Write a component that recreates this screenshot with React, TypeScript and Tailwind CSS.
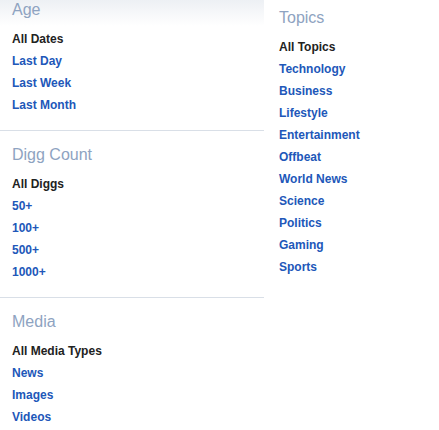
const sections = [
  {
    title: "Age",
    items: ["All Dates", "Last Day", "Last Week", "Last Month"],
  },
  {
    title: "Digg Count",
    items: ["All Diggs", "50+", "100+", "500+", "1000+"],
  },
  {
    title: "Media",
    items: ["All Media Types", "News", "Images", "Videos"],
  },
]

const topics = [
  "All Topics",
  "Technology",
  "Business",
  "Lifestyle",
  "Entertainment",
  "Offbeat",
  "World News",
  "Science",
  "Politics",
  "Gaming",
  "Sports",
]

const FilterList = ({ items }: { items: string[] }) => (
  <ul className="mt-2">
    {items.map((item, i) => (
      <li key={item} className="text-[12px] font-bold leading-[22px]">
        <a href="#" className={i === 0 ? "text-[#222]" : "text-[#2157b9]"}>
          {item}
        </a>
      </li>
    ))}
  </ul>
)

const App = () => {
  return (
    <div className="flex w-[439px] h-[430px] bg-white font-['Liberation_Sans',Arial,sans-serif] overflow-hidden">
      <div className="w-[264px] shrink-0 bg-[linear-gradient(to_bottom,#edf0f4,#ffffff_26px)]">
        {sections.map((section, i) => (
          <div
            key={section.title}
            className={`pl-3 ${i > 0 ? "pt-[14px]" : ""} ${
              i < sections.length - 1 ? "pb-[14px] border-b border-[#d9dfe7]" : ""
            }`}
          >
            <h2 className="text-[16px] leading-[20px] text-[#8ea3c1]">{section.title}</h2>
            <FilterList items={section.items} />
          </div>
        ))}
      </div>
      <div className="pl-[15px] pt-2">
        <h2 className="text-[16px] leading-[20px] text-[#8ea3c1]">Topics</h2>
        <FilterList items={topics} />
      </div>
    </div>
  )
}

export default App
